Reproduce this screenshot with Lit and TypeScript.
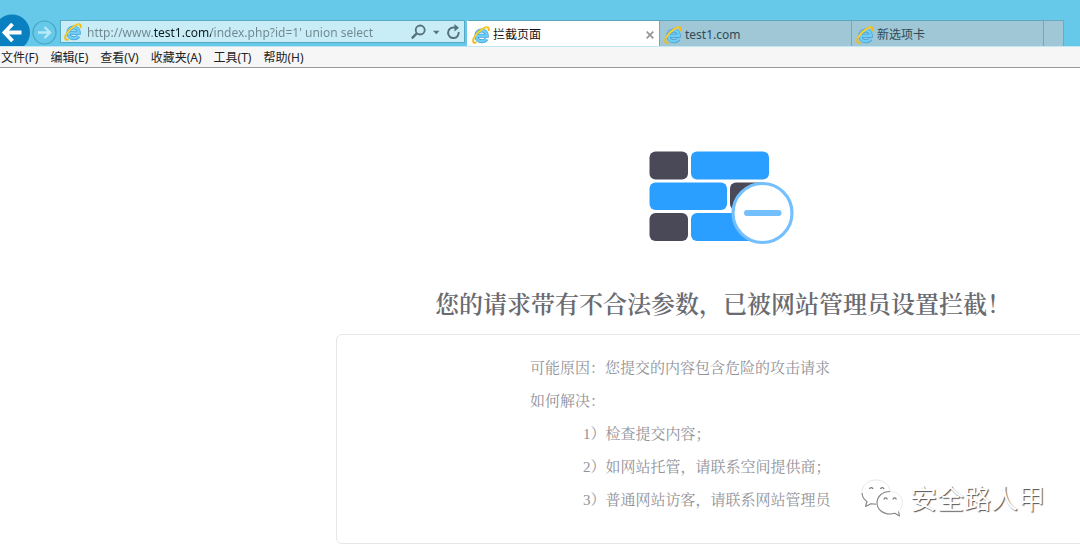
import { LitElement, html, css } from "lit";
import { customElement, property } from "lit/decorators.js";

@customElement("ie-logo")
class IeLogo extends LitElement {
  static styles = css`
    :host {
      display: block;
      flex: none;
      width: 18px;
      height: 18px;
    }
    svg {
      display: block;
    }
  `;
  render() {
    return html`<svg width="18" height="18" viewBox="0 0 18 18" fill="none" aria-hidden="true">
      <path d="M4.600 9.800H14.700C14.700 6.300 12.600 4.400 9.700 4.400C6.600 4.400 4.400 6.700 4.400 9.900C4.400 13.300 6.600 15.200 9.800 15.200C11.900 15.200 13.500 14.300 14.300 12.900" stroke="#3c9ed6" stroke-width="4" />
      <path d="M4.600 9.800H14.700C14.700 6.300 12.600 4.400 9.700 4.400C6.600 4.400 4.400 6.700 4.400 9.900C4.400 13.300 6.600 15.200 9.800 15.200C11.900 15.200 13.500 14.300 14.300 12.900" stroke="#6fcdf3" stroke-width="2.600" />
      <path d="M16.600 4.200C17.200 1.600 15.700 0.700 13.400 1.500C9.200 3 3.800 7.600 1.800 12.200C0.600 15.300 1.200 17.400 3.700 16.600" stroke="#f0bd1a" stroke-width="2" stroke-linecap="round" />
      <path d="M14.500 1.500C10.500 2.500 5 7 2.600 11.400" stroke="#ffdf55" stroke-width="0.900" stroke-linecap="round" />
    </svg>`;
  }
}

@customElement("browser-tab")
class BrowserTab extends LitElement {
  @property() label = "";
  @property({ type: Boolean, reflect: true }) active = false;

  static styles = css`
    :host {
      display: flex;
      align-items: center;
      box-sizing: border-box;
      flex: 0 1 192px;
      min-width: 0;
      padding: 2px 4px 0 4px;
      background: #9fc7d5;
      border-top: 1px solid #5ba6bf;
      border-left: 1px solid #6fa9bd;
      color: #2f4a55;
    }
    :host([active]) {
      background: #fff;
      border-left-color: #fff;
      color: #111;
    }
    .title {
      flex: 1;
      min-width: 0;
      padding: 0 0 0 3px;
      border: 0;
      background: none;
      color: inherit;
      font: inherit;
      line-height: 20px;
      text-align: left;
      white-space: nowrap;
      overflow: hidden;
    }
    .close {
      display: flex;
      padding: 0;
      border: 0;
      background: none;
    }
  `;
  render() {
    return html`<ie-logo></ie-logo>
      <button class="title" role="tab" aria-selected=${this.active ? "true" : "false"}>${this.label}</button>
      ${this.active
        ? html`<button class="close" aria-label="关闭">
            <svg width="10" height="10" viewBox="0 0 10 10"><path d="M1.700 1.700L8.300 8.300M8.300 1.700L1.700 8.300" stroke="#969696" stroke-width="1.700" /></svg>
          </button>`
        : ""}`;
  }
}

@customElement("app-root")
class AppRoot extends LitElement {
  static styles = css`
    :host {
      display: block;
      position: relative;
      min-height: 100vh;
      overflow: hidden;
      background: #fff;
      font: 12px/20px "Noto Sans", "Noto Sans CJK SC", sans-serif;
    }
    button {
      font: inherit;
      padding: 0;
      border: 0;
      background: none;
    }
    svg {
      display: block;
    }
    .toolbar {
      display: flex;
      height: 47px;
      box-sizing: border-box;
      padding-right: 16px;
      background: #66c9e9;
      border-bottom: 1px solid #bfe7f4;
    }
    .address {
      display: flex;
      align-items: center;
      flex: 1;
      min-width: 0;
      box-sizing: border-box;
      margin: 20px 2px 3px 2px;
      padding: 0 3px;
      background: #c9edf6;
      border: 1px solid #58aac4;
    }
    .url {
      flex: 1;
      min-width: 0;
      margin: 0;
      padding: 2px 0 0 5px;
      border: 0;
      outline: 0;
      font: inherit;
      background: linear-gradient(to right, #6f868e 72px, #0c1a20 72px, #0c1a20 129px, #6f868e 129px);
      -webkit-background-clip: text;
      background-clip: text;
      color: transparent;
    }
    .tools {
      display: flex;
      align-items: center;
      gap: 6px;
    }
    .tabs {
      display: flex;
      flex: 0 1 597px;
      min-width: 0;
      padding-top: 20px;
    }
    .new-tab {
      flex: 0 0 21px;
      box-sizing: border-box;
      background: #9fc7d5;
      border: 1px solid #6fa9bd;
      border-bottom: 0;
    }
    .menu {
      display: flex;
      gap: 12px;
      padding-left: 1px;
      background: #f6f6f6;
      border-bottom: 1px solid #999;
      color: #222;
    }
    .menu button {
      padding-top: 2px;
      line-height: 18px;
      color: inherit;
      white-space: nowrap;
    }
    main {
      margin-right: -30px;
      padding: 83px 0 3px 336px;
      font-family: "Liberation Serif", "Noto Serif CJK SC", "Noto Sans CJK SC", serif;
    }
    .wall {
      margin: 0 auto;
    }
    h1 {
      margin: 44px 0 13px;
      font-size: 24px;
      line-height: 32px;
      font-weight: 600;
      text-align: center;
      white-space: nowrap;
      color: #6a6b70;
    }
    .card {
      box-sizing: border-box;
      padding: 17px 0 26px 193px;
      border: 1px solid #e6e6e6;
      border-radius: 6px;
      font-size: 15px;
      line-height: 33px;
      color: #919298;
      white-space: nowrap;
    }
    p,
    ul {
      margin: 0;
    }
    ul {
      padding: 0 0 0 53px;
      list-style: none;
    }
    .mark {
      position: absolute;
      right: 35px;
      top: 478px;
      display: flex;
      align-items: center;
      gap: 7px;
      font: 27px/40px "Noto Sans CJK SC", sans-serif;
      color: #fff;
      text-shadow: 1px 1px 1px #555;
    }
  `;

  private menus = ["文件(F)", "编辑(E)", "查看(V)", "收藏夹(A)", "工具(T)", "帮助(H)"];
  private steps = ["1）检查提交内容；", "2）如网站托管，请联系空间提供商；", "3）普通网站访客，请联系网站管理员"];

  render() {
    return html`
      <header>
        <div class="toolbar">
          <button aria-label="后退">
            <svg width="30" height="46" viewBox="0 0 30 46" fill="none">
              <circle cx="12" cy="32.500" r="18" fill="#0a80c0" />
              <path d="M21.500 32.500H5M12.500 24L4.500 32.500L12.500 41" stroke="#fff" stroke-width="3.800" />
            </svg>
          </button>
          <button aria-label="前进">
            <svg width="28" height="46" viewBox="0 0 28 46" fill="none">
              <circle cx="14.500" cy="32.500" r="11.500" stroke="#48a3c1" stroke-width="1.200" />
              <path d="M8 32.500H19.500M14.500 27L20 32.500L14.500 38" stroke="#b9e8f6" stroke-width="2.400" />
            </svg>
          </button>
          <div class="address">
            <ie-logo></ie-logo>
            <input class="url" type="text" aria-label="地址" value="http://www.test1.com/index.php?id=1' union select" />
            <div class="tools">
              <button aria-label="搜索">
                <svg width="16" height="16" viewBox="0 0 16 16" fill="none" stroke="#55727c">
                  <circle cx="9.200" cy="6" r="4.500" stroke-width="1.800" />
                  <path d="M6 9.200L0.800 14.300" stroke-width="2.400" />
                </svg>
              </button>
              <button aria-label="显示地址列表">
                <svg width="7" height="16" viewBox="0 0 7 16"><path d="M0 6.700H6.500L3.250 10.200Z" fill="#55727c" /></svg>
              </button>
              <button aria-label="刷新">
                <svg width="15" height="16" viewBox="0 0 15 16" fill="none">
                  <path d="M12.600 8A5.300 5.300 0 1 1 7.500 3.500H9.500" stroke="#55727c" stroke-width="2" />
                  <path d="M8.500 0L13 3.700L8.500 7.500Z" fill="#55727c" />
                </svg>
              </button>
            </div>
          </div>
          <div class="tabs" role="tablist">
            <browser-tab active label="拦截页面"></browser-tab>
            <browser-tab label="test1.com"></browser-tab>
            <browser-tab label="新选项卡"></browser-tab>
            <button class="new-tab" aria-label="新建选项卡"></button>
          </div>
        </div>
        <nav class="menu">${this.menus.map((m) => html`<button>${m}</button>`)}</nav>
      </header>
      <main>
        <svg class="wall" width="148" height="94" viewBox="0 0 148 94" aria-hidden="true">
          <g fill="#4a4957">
            <rect x="0.500" y="0.500" width="38.500" height="28" rx="6" />
            <rect x="81" y="31.500" width="38.500" height="27.500" rx="6" />
            <rect x="0.500" y="62" width="38.500" height="28" rx="6" />
          </g>
          <g fill="#2a9fff">
            <rect x="42" y="0.500" width="78" height="28" rx="6" />
            <rect x="0.500" y="31.500" width="77.500" height="27.500" rx="6" />
            <rect x="42" y="62" width="78" height="28" rx="6" />
          </g>
          <circle cx="113.500" cy="62" r="29.500" fill="#fff" stroke="#74c0ff" stroke-width="3.200" />
          <rect x="95" y="59" width="37.500" height="6" rx="3" fill="#74c0ff" />
        </svg>
        <h1>您的请求带有不合法参数，已被网站管理员设置拦截！</h1>
        <section class="card">
          <p>可能原因：您提交的内容包含危险的攻击请求</p>
          <p>如何解决：</p>
          <ul>
            ${this.steps.map((s) => html`<li>${s}</li>`)}
          </ul>
        </section>
      </main>
      <div class="mark">
        <svg width="44" height="40" viewBox="0 0 44 40" fill="#fff" stroke-linejoin="round">
          <path d="M17 2C9 2 3 7.300 3 14C3 18 5 21.300 8 23.500L6.500 28.500L12 25.500C13.600 26 15.300 26.200 17 26.200C25 26.200 31 20.700 31 14C31 7.300 25 2 17 2Z" stroke="#ddd" stroke-width="0.700" />
          <path d="M3 15C3.300 19 5 21.700 8 23.500L6.500 28.500L12 25.700L17.500 26.300" fill="none" stroke="#888" stroke-width="1.100" />
          <path d="M31 13.500C23.500 13.500 18 18.500 18 24.800C18 31 23.500 36 31 36C32.700 36 34.300 35.700 35.800 35.300L40.500 38L39.500 33.500C42 31.400 43.400 28.300 43.400 24.800C43.400 18.500 38.500 13.500 31 13.500Z" stroke="#e2e2e2" stroke-width="0.700" />
          <path d="M31 13.500C23.500 13.500 18 18.500 18 24.800C18 31 23.500 36 31 36C32.700 36 34.300 35.700 35.800 35.300L40.500 38L39.500 33.500" fill="none" stroke="#888" stroke-width="1.100" />
          <path d="M10.500 11A1.800 1.800 0 0 1 14 11M21.500 11A1.800 1.800 0 0 1 25 11M25 21.500A1.600 1.600 0 0 1 28.200 21.500M34 21.500A1.600 1.600 0 0 1 37.200 21.500" fill="none" stroke="#777" stroke-width="1.200" />
        </svg>
        <span>安全路人甲</span>
      </div>
    `;
  }
}
